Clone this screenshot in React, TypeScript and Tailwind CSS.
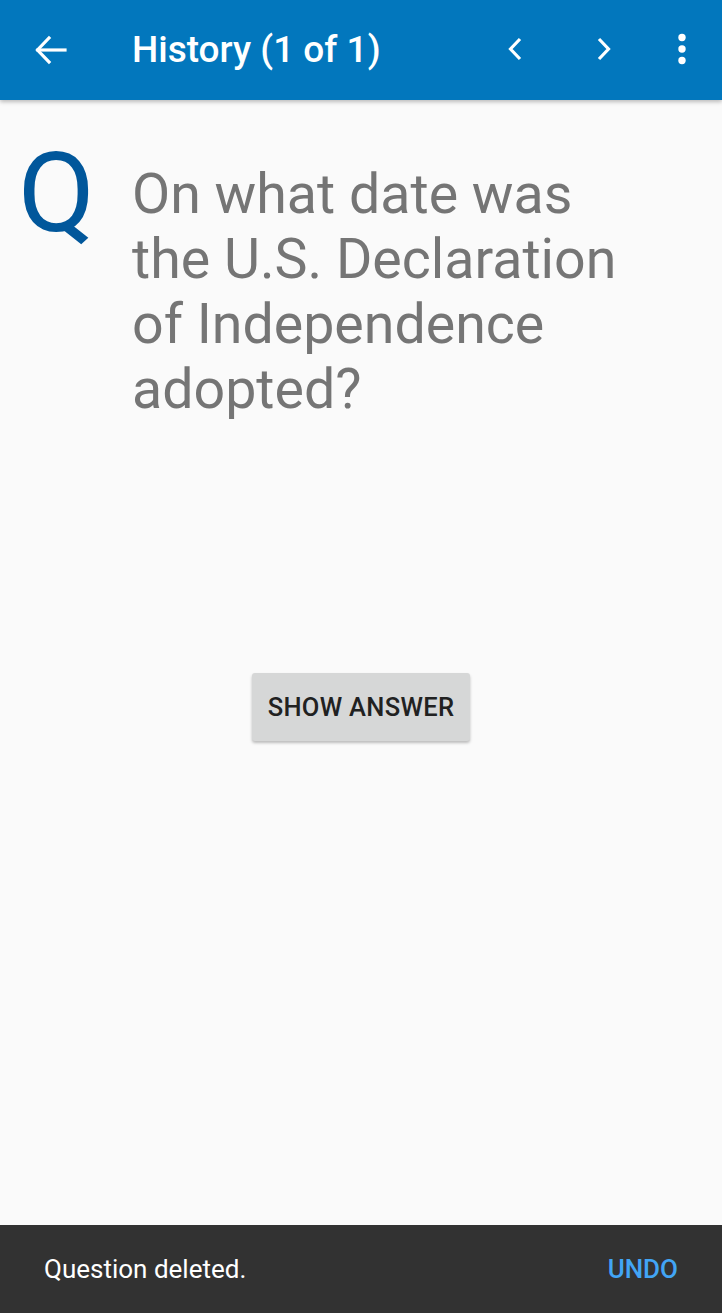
import React from "react";

export default function App() {
  return (
    <div className="w-[722px] h-[1313px] flex flex-col bg-[#fafafa] overflow-hidden" style={{ fontFamily: "Roboto, 'Liberation Sans', sans-serif" }}>
      <header className="h-[100px] shrink-0 bg-[#0277bd] flex items-center relative shadow-[0_2px_4px_rgba(0,0,0,0.25)] z-10">
        <div className="w-[132px] h-full flex items-center pl-[34px]">
          <svg width="34" height="32" viewBox="0 0 34 32" fill="none" stroke="white" strokeWidth="3.2" strokeLinecap="square">
            <path d="M4 16 H31" />
            <path d="M15 4 L3.5 16 L15 28" strokeLinejoin="miter" />
          </svg>
        </div>
        <div className="flex-1 text-white text-[37px] font-medium leading-none pb-[2px]">History (1 of 1)</div>
        <div className="flex items-center h-full pr-[36px]">
          <svg className="mb-[3px]" width="18" height="24" viewBox="0 0 18 24" fill="none" stroke="white" strokeWidth="3.2">
            <path d="M14 2 L4.5 12 L14 22" />
          </svg>
          <svg className="ml-[71px] mb-[3px]" width="18" height="24" viewBox="0 0 18 24" fill="none" stroke="white" strokeWidth="3.2">
            <path d="M4 2 L13.5 12 L4 22" />
          </svg>
          <svg className="ml-[65px] mb-[3px]" width="8" height="32" viewBox="0 0 8 32" fill="white">
            <circle cx="4" cy="4.5" r="3.7" />
            <circle cx="4" cy="16" r="3.7" />
            <circle cx="4" cy="27.5" r="3.7" />
          </svg>
        </div>
      </header>
      <main className="flex-1 flex flex-col">
        <div className="flex pt-[40px]">
          <div className="w-[132px] shrink-0 pl-[18px] text-[#01579b] text-[112px] leading-[1] -mt-[3px]">Q</div>
          <div className="w-[510px] text-[#757575] text-[55.5px] leading-[65px] mt-[22px]">
            On what date was the U.S. Declaration of Independence adopted?
          </div>
        </div>
        <div className="flex justify-center mt-[251px]">
          <button className="w-[218px] h-[68px] bg-[#d6d7d7] rounded-[3px] shadow-[0_2px_3px_rgba(0,0,0,0.25)] text-[#212121] text-[25.5px] font-medium tracking-[0.3px]">
            SHOW ANSWER
          </button>
        </div>
      </main>
      <footer className="h-[88px] shrink-0 bg-[#323232] flex items-center justify-between pl-[44px] pr-[44px]">
        <span className="text-white text-[26px]">Question deleted.</span>
        <span className="text-[#42a5f5] text-[26px] font-medium">UNDO</span>
      </footer>
    </div>
  );
}
